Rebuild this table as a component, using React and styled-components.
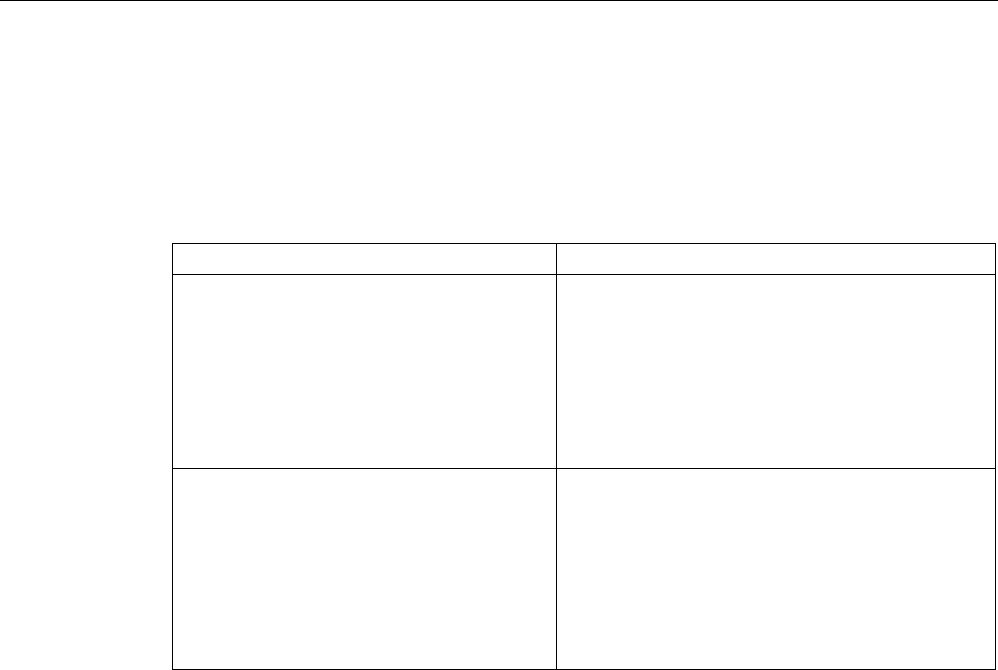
import React from "react";
import styled, { createGlobalStyle } from "styled-components";

const GlobalStyle = createGlobalStyle`
  html, body {
    margin: 0;
    padding: 0;
    background: #ffffff;
    font-family: "Liberation Sans", Arial, sans-serif;
    color: #000000;
  }
`;

const TopRule = styled.div`
  height: 0;
  border-top: 1px solid #000000;
`;

const Page = styled.main`
  padding: 242px 0 0 172px;
`;

const Grid = styled.div`
  display: grid;
  grid-template-columns: 384px 439px;
  grid-template-rows: 31px 194px 201px;
  width: 824px;
  border-top: 1px solid #000000;
  border-left: 1px solid #000000;
  box-sizing: border-box;
`;

const Cell = styled.div`
  border-right: 1px solid #000000;
  border-bottom: 1px solid #000000;
  box-sizing: border-box;
  font-size: 14px;
  padding: ${({ head }) => (head ? "6px 8px" : "8px")};
  font-weight: ${({ head }) => (head ? 700 : 400)};
`;

const rows = [
  ["", ""],
  ["", ""],
];

const App = () => {
  return (
    <>
      <GlobalStyle />
      <TopRule />
      <Page>
        <Grid>
          <Cell head></Cell>
          <Cell head></Cell>
          {rows.map((row, i) =>
            row.map((text, j) => <Cell key={`${i}-${j}`}>{text}</Cell>)
          )}
        </Grid>
      </Page>
    </>
  );
};

export default App;
